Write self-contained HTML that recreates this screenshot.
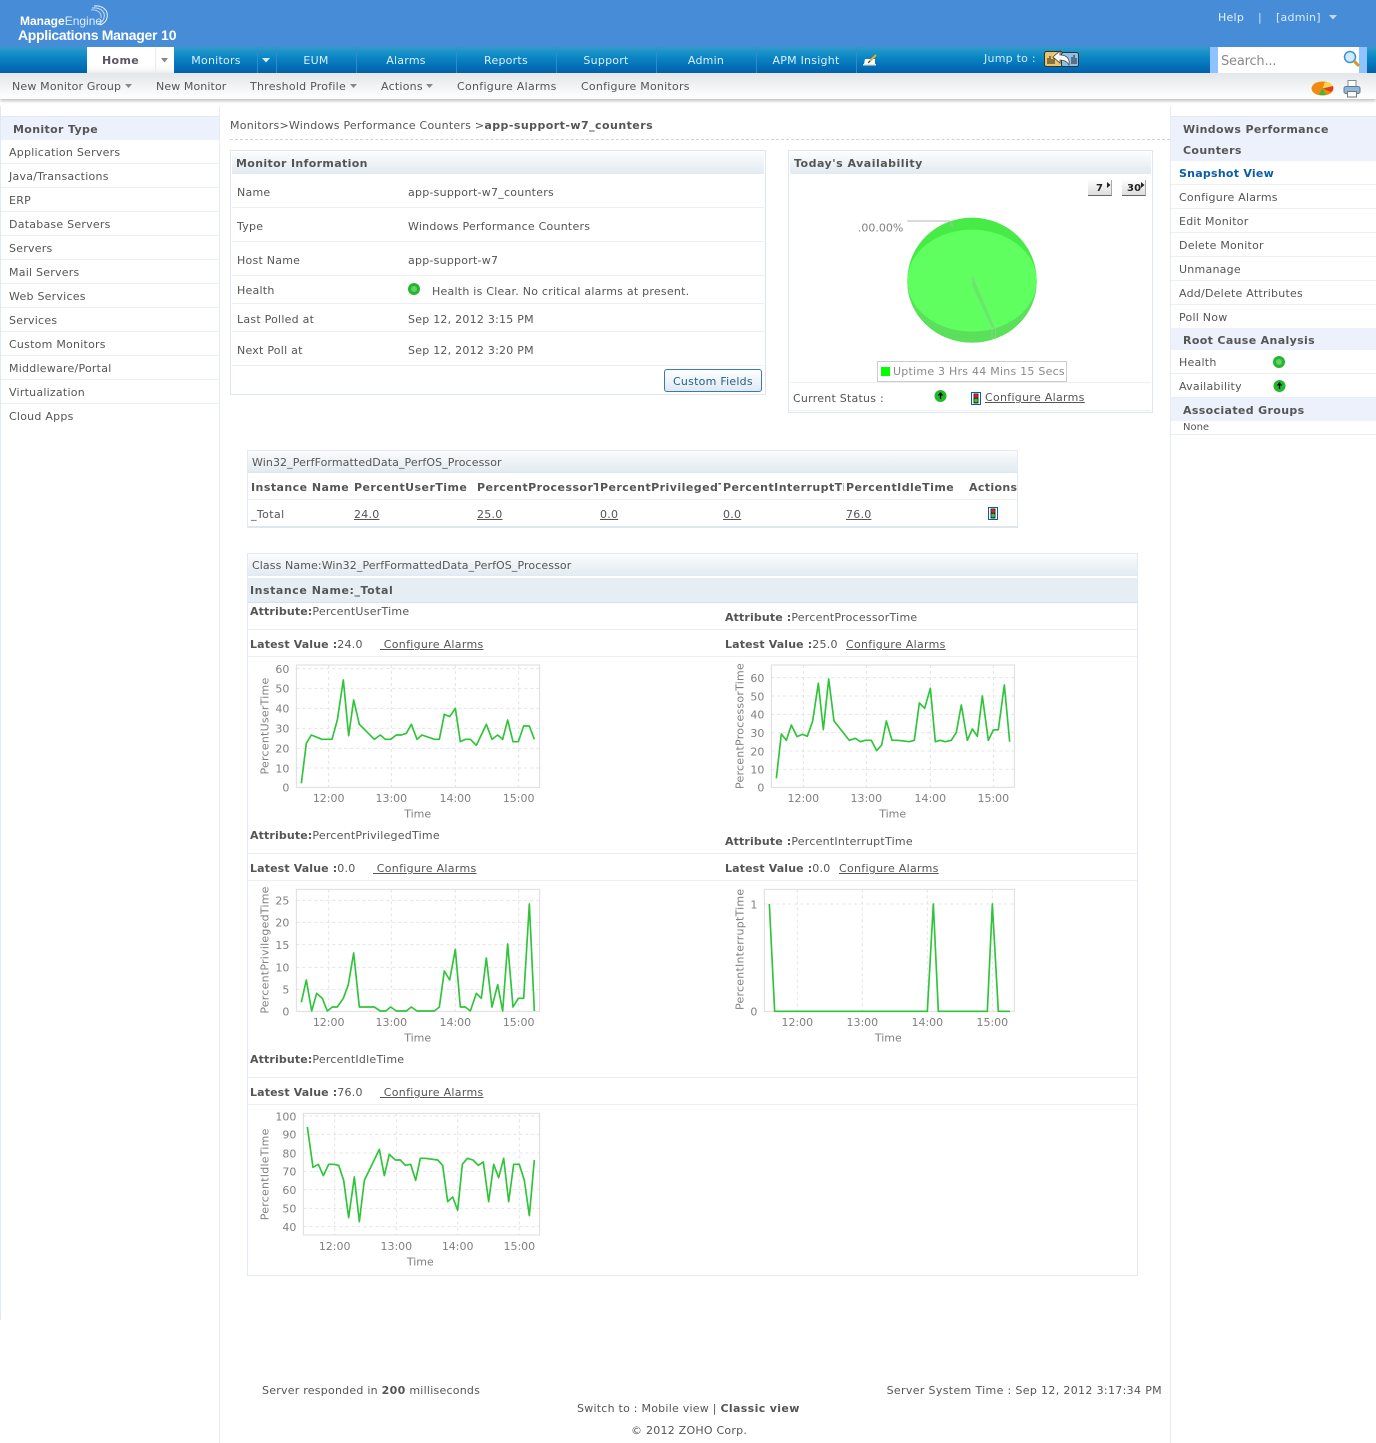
<!DOCTYPE html>
<html><head><meta charset="utf-8"><title>Applications Manager</title>
<style>
html,body{margin:0;padding:0;background:#fff}
body{position:relative;width:1376px;height:1443px;overflow:hidden;font:11px/14px "DejaVu Sans","Liberation Sans",sans-serif;color:#555}
.t{position:absolute;white-space:nowrap;line-height:14px;margin-top:1px;letter-spacing:.24px}
.b{font-weight:bold;letter-spacing:.35px}
.a{font-weight:bold;letter-spacing:.13px}
.r{position:absolute}
.u{text-decoration:underline}
.nav{color:#dcefff;transform:translateX(-50%)}
.hl{position:absolute;height:1px;background:#ebf0f6}
.grad{position:absolute;background:linear-gradient(#fbfcfd,#e2eaf1)}
.band{position:absolute;background:#edf1fb}
.clip{overflow:hidden}
.th{letter-spacing:.45px}
.sm{font-size:11px;letter-spacing:.1px}
svg{position:absolute;overflow:visible}
svg text{font-family:"DejaVu Sans","Liberation Sans",sans-serif;font-size:33px;fill:#808080;letter-spacing:0}
svg text[transform]{letter-spacing:.7px}
.g{stroke:#e4e4e4;stroke-width:3;stroke-dasharray:9 9;fill:none}
.box{fill:none;stroke:#ddd;stroke-width:3}
.l{fill:none;stroke:#2fc43a;stroke-width:5;stroke-linejoin:round}
</style></head><body>

<!-- top header -->
<div class="r" style="left:0;top:0;width:1376px;height:47px;background:#478cd7"></div>
<div class="t" style="left:20px;top:13px;color:#fff;font:bold 12px/14px 'Liberation Sans',sans-serif;letter-spacing:0">Manage<span style="font-weight:normal;color:#dfeeff">Engine</span></div>
<div class="t" style="left:18px;top:27px;color:#fff;font:bold 14px/15px 'Liberation Sans',sans-serif;letter-spacing:-.32px">Applications Manager</div>
<div class="t" style="left:161px;top:27px;color:#fff;font:bold 14px/15px 'Liberation Sans',sans-serif;letter-spacing:0">10</div>
<svg style="left:84px;top:4px" width="28" height="24" viewBox="0 0 28 24"><path d="M10 2C18 1 25 6 23 14C22 18 19 20 16 21" fill="none" stroke="#eaf3ff" stroke-width="1"/><path d="M8 4C15 3 22 7 20 14C19 17 17 19 14 20" fill="none" stroke="#cfe2fa" stroke-width="1"/><path d="M7 6C13 5 18 9 17 14" fill="none" stroke="#b8d4f5" stroke-width="1"/></svg>
<div class="t" style="left:1218px;top:10px;color:#e8f3ff">Help</div>
<div class="t" style="left:1258px;top:10px;color:#cfe3fb">|</div>
<div class="t" style="left:1276px;top:10px;color:#dcebff">[admin]</div>
<svg style="left:1329px;top:15px" width="8" height="5"><path d="M0 0H8L4 4.500Z" fill="#c3daf5"/></svg>

<!-- nav -->
<div class="r" style="left:0;top:47px;width:1376px;height:26px;background:linear-gradient(#2e9ccb,#0a86c4 40%,#0060ad)"></div>
<div class="r" style="left:87px;top:47px;width:87px;height:26px;background:linear-gradient(#fff,#fff 70%,#eef1f3)"></div>
<div class="r" style="left:155px;top:47px;width:1px;height:26px;background:#e8ebed"></div>
<div class="t b" style="left:102px;top:53px;color:#5a5560">Home</div>
<svg style="left:161px;top:58px" width="8" height="5"><path d="M0 0H7L3.500 4.500Z" fill="#888"/></svg>
<svg style="left:262px;top:58px" width="8" height="5"><path d="M0 0H8L4 4.500Z" fill="#d6ecfb"/></svg>
<div class="r" style="left:257px;top:47px;width:1px;height:26px;background:#2e8dcb"></div>
<div class="r" style="left:276px;top:47px;width:1px;height:26px;background:#2e8dcb"></div>
<div class="r" style="left:356px;top:47px;width:1px;height:26px;background:#2e8dcb"></div>
<div class="r" style="left:456px;top:47px;width:1px;height:26px;background:#2e8dcb"></div>
<div class="r" style="left:556px;top:47px;width:1px;height:26px;background:#2e8dcb"></div>
<div class="r" style="left:656px;top:47px;width:1px;height:26px;background:#2e8dcb"></div>
<div class="r" style="left:756px;top:47px;width:1px;height:26px;background:#2e8dcb"></div>
<div class="r" style="left:856px;top:47px;width:1px;height:26px;background:#2e8dcb"></div>
<div class="t nav" style="left:216px;top:53px">Monitors</div>
<div class="t nav" style="left:316px;top:53px">EUM</div>
<div class="t nav" style="left:406px;top:53px">Alarms</div>
<div class="t nav" style="left:506px;top:53px">Reports</div>
<div class="t nav" style="left:606px;top:53px">Support</div>
<div class="t nav" style="left:706px;top:53px">Admin</div>
<div class="t nav" style="left:806px;top:53px">APM Insight</div>
<svg style="left:862px;top:54px" width="16" height="12" viewBox="0 0 16 12"><path d="M3 5H13V10H2Z" fill="#fff"/><path d="M1 10H14V11.500H1Z" fill="#e4e4e4"/><path d="M7 8L14 1" stroke="#e6b030" stroke-width="2"/><path d="M6 9L8 7" stroke="#333" stroke-width="1"/></svg>
<div class="t" style="left:984px;top:51px;color:#d4ecff">Jump to :</div>
<svg style="left:1044px;top:50px" width="36" height="19" viewBox="0 0 36 19"><rect x=".5" y="1.500" width="18" height="15" rx="2" fill="#e8c46a" stroke="#333"/><rect x="17.500" y="2.500" width="17" height="14" rx="2" fill="#8fc0ea" stroke="#333"/><path d="M4 14V8M6 14V6M8 14V9M10 14V7M28 14V7M30 14V5M32 14V8" stroke="#222" stroke-width="1"/><path d="M9 7L16 1V5C23 5 26 9 25 15C23 11 20 10 16 10V13Z" fill="#fff" stroke="#444" stroke-width=".8"/></svg>
<div class="r" style="left:1210px;top:47px;width:157px;height:26px;background:#8fc3ff"></div>
<div class="r" style="left:1218px;top:47px;width:141px;height:26px;background:#fff"></div>
<div class="t" style="left:1221px;top:54px;font-size:13px;color:#8a8a8a;letter-spacing:-.2px">Search...</div>
<svg style="left:1343px;top:50px" width="18" height="19" viewBox="0 0 18 19"><circle cx="7" cy="7" r="5.500" fill="#cfeaff" stroke="#3b8fd0" stroke-width="1.500"/><path d="M11 11L16 16" stroke="#d09a20" stroke-width="3"/></svg>

<!-- sub menu -->
<div class="r" style="left:0;top:73px;width:1376px;height:26px;background:linear-gradient(#e3e7e9,#fff);box-shadow:0 2px 3px rgba(120,120,120,.45)"></div>
<div class="t" style="left:12px;top:79px;letter-spacing:.17px">New Monitor Group</div>
<svg style="left:125px;top:84px" width="7" height="4"><path d="M0 0H7L3.500 4Z" fill="#888"/></svg>
<div class="t" style="left:156px;top:79px;letter-spacing:.1px">New Monitor</div>
<div class="t" style="left:250px;top:79px">Threshold Profile</div>
<svg style="left:350px;top:84px" width="7" height="4"><path d="M0 0H7L3.500 4Z" fill="#888"/></svg>
<div class="t" style="left:381px;top:79px">Actions</div>
<svg style="left:426px;top:84px" width="7" height="4"><path d="M0 0H7L3.500 4Z" fill="#888"/></svg>
<div class="t" style="left:457px;top:79px;letter-spacing:.3px">Configure Alarms</div>
<div class="t" style="left:581px;top:79px">Configure Monitors</div>
<svg style="left:1311px;top:81px" width="23" height="15" viewBox="0 0 23 15"><ellipse cx="11.500" cy="7.500" rx="11" ry="7" fill="#f08a10"/><path d="M11.500 7.500L22 5A11 7 0 0 1 20 11Z" fill="#e83a20"/><path d="M11.500 7.500L22 5A11 7 0 0 0 14 1Z" fill="#f7d94a"/><path d="M11.500 7.500L15 14H8Z" fill="#2fbf3a"/></svg>
<svg style="left:1343px;top:80px" width="18" height="18" viewBox="0 0 18 18"><rect x="5" y=".5" width="8" height="7" fill="#fff" stroke="#888"/><rect x="1" y="6.500" width="16" height="7" rx="2" fill="#8fb8dc" stroke="#5a7a96"/><rect x="4.500" y="11.500" width="9" height="5.500" fill="#fff" stroke="#777"/></svg>

<!-- sidebars -->
<div class="r" style="left:0;top:106px;width:1px;height:1214px;background:#dfe8f3"></div>
<div class="r" style="left:219px;top:106px;width:1px;height:1337px;background:#e4ebf3"></div>
<div class="r" style="left:1170px;top:106px;width:1px;height:1337px;background:#e4ebf3"></div>
<div class="band" style="left:1px;top:116px;width:218px;height:24px;border-top:1px solid #e2e9f3;box-sizing:border-box"></div>
<div class="t b" style="left:13px;top:122px">Monitor Type</div>
<div class="t" style="left:9px;top:145px">Application Servers</div><div class="hl" style="left:1px;top:163px;width:218px"></div>
<div class="t" style="left:9px;top:169px">Java/Transactions</div><div class="hl" style="left:1px;top:187px;width:218px"></div>
<div class="t" style="left:9px;top:193px">ERP</div><div class="hl" style="left:1px;top:211px;width:218px"></div>
<div class="t" style="left:9px;top:217px">Database Servers</div><div class="hl" style="left:1px;top:235px;width:218px"></div>
<div class="t" style="left:9px;top:241px">Servers</div><div class="hl" style="left:1px;top:259px;width:218px"></div>
<div class="t" style="left:9px;top:265px">Mail Servers</div><div class="hl" style="left:1px;top:283px;width:218px"></div>
<div class="t" style="left:9px;top:289px">Web Services</div><div class="hl" style="left:1px;top:307px;width:218px"></div>
<div class="t" style="left:9px;top:313px">Services</div><div class="hl" style="left:1px;top:331px;width:218px"></div>
<div class="t" style="left:9px;top:337px">Custom Monitors</div><div class="hl" style="left:1px;top:355px;width:218px"></div>
<div class="t" style="left:9px;top:361px">Middleware/Portal</div><div class="hl" style="left:1px;top:379px;width:218px"></div>
<div class="t" style="left:9px;top:385px">Virtualization</div><div class="hl" style="left:1px;top:403px;width:218px"></div>
<div class="t" style="left:9px;top:409px">Cloud Apps</div>

<div class="band" style="left:1171px;top:116px;width:205px;height:45px;border-top:1px solid #e2e9f3;box-sizing:border-box"></div>
<div class="t b" style="left:1183px;top:122px">Windows Performance</div>
<div class="t b" style="left:1183px;top:143px">Counters</div>
<div class="t b" style="left:1179px;top:166px;color:#0a5cab;letter-spacing:.25px">Snapshot View</div><div class="hl" style="left:1171px;top:184px;width:205px"></div>
<div class="t" style="left:1179px;top:190px">Configure Alarms</div><div class="hl" style="left:1171px;top:208px;width:205px"></div>
<div class="t" style="left:1179px;top:214px">Edit Monitor</div><div class="hl" style="left:1171px;top:232px;width:205px"></div>
<div class="t" style="left:1179px;top:238px">Delete Monitor</div><div class="hl" style="left:1171px;top:256px;width:205px"></div>
<div class="t" style="left:1179px;top:262px">Unmanage</div><div class="hl" style="left:1171px;top:280px;width:205px"></div>
<div class="t" style="left:1179px;top:286px">Add/Delete Attributes</div><div class="hl" style="left:1171px;top:304px;width:205px"></div>
<div class="t" style="left:1179px;top:310px">Poll Now</div>
<div class="band" style="left:1171px;top:328px;width:205px;height:22px"></div>
<div class="t b" style="left:1183px;top:333px">Root Cause Analysis</div>
<div class="t" style="left:1179px;top:355px">Health</div><div class="hl" style="left:1171px;top:373px;width:205px"></div>
<svg style="left:1273px;top:356px" width="12" height="12"><circle cx="6" cy="6" r="6" fill="#25b530"/><circle cx="6" cy="6" r="3" fill="#62cf68"/></svg>
<div class="t" style="left:1179px;top:379px">Availability</div><div class="hl" style="left:1171px;top:397px;width:205px"></div>
<svg style="left:1273px;top:380px" width="13" height="12" viewBox="0 0 13 12"><circle cx="6.500" cy="6" r="6" fill="#22b82e"/><path d="M6.500 9V4M4.500 5.500L6.500 3L8.500 5.500" stroke="#000" stroke-width="1.300" fill="none"/></svg>
<div class="band" style="left:1171px;top:398px;width:205px;height:23px"></div>
<div class="t b" style="left:1183px;top:403px">Associated Groups</div>
<div class="t" style="left:1183px;top:420px;font-size:10px;letter-spacing:0">None</div><div class="hl" style="left:1171px;top:434px;width:205px"></div>

<!-- breadcrumb -->
<div class="t" style="left:230px;top:118px">Monitors&gt;Windows Performance Counters &gt;<span class="b" style="letter-spacing:.45px">app-support-w7_counters</span></div>
<div class="r" style="left:230px;top:139px;width:940px;border-top:1px dashed #ccd3d9"></div>

<!-- Monitor info -->
<div class="r" style="left:230px;top:150px;width:534px;height:243px;border:1px solid #dde6ee"></div>
<div class="grad" style="left:232px;top:152px;width:532px;height:22px"></div>
<div class="t b" style="left:236px;top:156px">Monitor Information</div>
<div class="t" style="left:237px;top:185px">Name</div><div class="t" style="left:408px;top:185px">app-support-w7_counters</div>
<div class="hl" style="left:232px;top:207px;width:532px"></div>
<div class="t" style="left:237px;top:219px">Type</div><div class="t" style="left:408px;top:219px">Windows Performance Counters</div>
<div class="hl" style="left:232px;top:241px;width:532px"></div>
<div class="t" style="left:237px;top:253px">Host Name</div><div class="t" style="left:408px;top:253px">app-support-w7</div>
<div class="hl" style="left:232px;top:275px;width:532px"></div>
<div class="t" style="left:237px;top:283px">Health</div>
<svg style="left:408px;top:283px" width="12" height="12"><circle cx="6" cy="6" r="6" fill="#25b530"/><circle cx="6" cy="6" r="3" fill="#62cf68"/></svg>
<div class="t" style="left:432px;top:284px">Health is Clear. No critical alarms at present.</div>
<div class="hl" style="left:232px;top:303px;width:532px"></div>
<div class="t" style="left:237px;top:312px">Last Polled at</div><div class="t" style="left:408px;top:312px">Sep 12, 2012 3:15 PM</div>
<div class="hl" style="left:232px;top:331px;width:532px"></div>
<div class="t" style="left:237px;top:343px">Next Poll at</div><div class="t" style="left:408px;top:343px">Sep 12, 2012 3:20 PM</div>
<div class="hl" style="left:232px;top:365px;width:532px"></div>
<div class="r" style="left:664px;top:369px;width:96px;height:21px;border:1px solid #3a7ca8;border-radius:3px;background:linear-gradient(#fff,#dfe9f2)"></div>
<div class="t" style="left:673px;top:374px;color:#245f8c">Custom Fields</div>

<!-- Availability -->
<div class="r" style="left:788px;top:150px;width:363px;height:261px;border:1px solid #dde6ee"></div>
<div class="grad" style="left:790px;top:152px;width:361px;height:22px"></div>
<div class="t b" style="left:794px;top:156px;letter-spacing:.5px">Today's Availability</div>
<div class="r" style="left:1088px;top:180px;width:23px;height:15px;background:linear-gradient(#fdfdfd,#ddd);border-bottom:1px solid #666;border-right:1px solid #aaa"></div>
<div class="t b" style="left:1096px;top:181px;color:#222;font-size:10px;letter-spacing:0">7</div>
<svg style="left:1107px;top:182px" width="4" height="6"><path d="M0 0L3.500 3L0 6Z" fill="#222"/></svg>
<div class="r" style="left:1122px;top:180px;width:23px;height:15px;background:linear-gradient(#fdfdfd,#ddd);border-bottom:1px solid #666;border-right:1px solid #aaa"></div>
<div class="t b" style="left:1127px;top:181px;color:#222;font-size:10px;letter-spacing:.2px">30</div>
<svg style="left:1141px;top:182px" width="4" height="6"><path d="M0 0L3.500 3L0 6Z" fill="#222"/></svg>
<svg style="left:788px;top:150px" width="370" height="270" viewBox="0 0 1110 810">
<path d="M358 390A194 187 0 0 1 746 390V396A194 182 0 0 1 358 396Z" fill="#47ea47"/>
<path d="M358 390A194 153 0 0 0 746 390V396A194 182 0 0 1 358 396Z" fill="#5ae05a"/>
<ellipse cx="552" cy="392" rx="194" ry="153" fill="#5fff5f"/>
<path d="M552 372L552 408L612 535L622 535Z" fill="#5cf05c" stroke="#a5d0a5" stroke-width="1.500"/>
<path d="M622 535V570M612 535V566" stroke="#a5d0a5" stroke-width="1.500" fill="none"/>
<path d="M358 213H485L495 230" stroke="#b5b5b5" stroke-width="3" fill="none"/>
<text x="346" y="245" text-anchor="end">.00.00%</text>
</svg>
<div class="r" style="left:877px;top:361px;width:188px;height:19px;border:1px solid #ccc"></div>
<div class="r" style="left:881px;top:367px;width:9px;height:9px;background:#0f0"></div>
<div class="t" style="left:893px;top:364px;color:#8a8a8a">Uptime 3 Hrs 44 Mins 15 Secs</div>
<div class="hl" style="left:790px;top:382px;width:361px"></div>
<div class="hl" style="left:790px;top:410px;width:361px"></div>
<div class="t" style="left:793px;top:391px">Current Status :</div>
<svg style="left:934px;top:390px" width="13" height="12" viewBox="0 0 13 12"><circle cx="6.500" cy="6" r="6" fill="#22b82e"/><path d="M6.500 9V4M4.500 5.500L6.500 3L8.500 5.500" stroke="#000" stroke-width="1.300" fill="none"/></svg>
<svg style="left:971px;top:392px" width="10" height="13" viewBox="0 0 10 13"><rect x=".5" y=".5" width="9" height="12" fill="#fff" stroke="#0a5cab"/><rect x="2.500" y="1.500" width="5" height="10" fill="#333"/><circle cx="5" cy="4" r="1.800" fill="#e02020"/><circle cx="5" cy="8.500" r="1.800" fill="#3c3"/></svg>
<div class="t u" style="left:985px;top:390px;letter-spacing:.3px">Configure Alarms</div>

<!-- instance table -->
<div class="r" style="left:247px;top:450px;width:769px;height:75px;border:1px solid #e2e9f0;border-bottom:2px solid #dfe6ec"></div>
<div class="grad" style="left:248px;top:451px;width:769px;height:21px"></div>
<div class="t sm" style="left:252px;top:455px">Win32_PerfFormattedData_PerfOS_Processor</div>
<div class="hl" style="left:248px;top:472px;width:769px;background:#dfe7ee"></div>
<div class="hl" style="left:248px;top:499px;width:769px"></div>
<div class="t b th" style="left:251px;top:480px">Instance Name</div>
<div class="t b th clip" style="left:354px;top:480px;width:122px">PercentUserTime</div>
<div class="t b th clip" style="left:477px;top:480px;width:121px">PercentProcessorTime</div>
<div class="t b th clip" style="left:600px;top:480px;width:121px">PercentPrivilegedTime</div>
<div class="t b th clip" style="left:723px;top:480px;width:121px">PercentInterruptTime</div>
<div class="t b th clip" style="left:846px;top:480px;width:121px">PercentIdleTime</div>
<div class="t b" style="left:969px;top:480px">Actions</div>
<div class="t" style="left:251px;top:507px;letter-spacing:.4px">_Total</div>
<div class="t u" style="left:354px;top:507px">24.0</div>
<div class="t u" style="left:477px;top:507px">25.0</div>
<div class="t u" style="left:600px;top:507px">0.0</div>
<div class="t u" style="left:723px;top:507px">0.0</div>
<div class="t u" style="left:846px;top:507px">76.0</div>
<svg style="left:988px;top:507px" width="10" height="13" viewBox="0 0 10 13"><rect x=".5" y=".5" width="9" height="12" fill="#fff" stroke="#0a5cab"/><rect x="2.500" y="1.500" width="5" height="10" fill="#333"/><circle cx="5" cy="4" r="1.800" fill="#e02020"/><circle cx="5" cy="8.500" r="1.800" fill="#3c3"/></svg>

<!-- class box -->
<div class="r" style="left:247px;top:553px;width:889px;height:721px;border:1px solid #e2e9f0"></div>
<div class="grad" style="left:248px;top:554px;width:889px;height:22px"></div>
<div class="t sm" style="left:252px;top:558px">Class Name:Win32_PerfFormattedData_PerfOS_Processor</div>
<div class="r" style="left:248px;top:578px;width:889px;height:24px;background:#e6edf3;border-bottom:1px solid #d8e1e9"></div>
<div class="t b" style="left:250px;top:583px;letter-spacing:.55px">Instance Name:_Total</div>

<div class="t" style="left:250px;top:604px"><span class="a">Attribute:</span>PercentUserTime</div>
<div class="t" style="left:725px;top:610px"><span class="a">Attribute :</span>PercentProcessorTime</div>
<div class="hl" style="left:248px;top:629px;width:889px"></div>
<div class="t" style="left:250px;top:637px"><span class="a">Latest Value :</span>24.0</div>
<div class="t u" style="left:380px;top:637px;letter-spacing:.3px">&nbsp;Configure Alarms</div>
<div class="t" style="left:725px;top:637px"><span class="a">Latest Value :</span>25.0</div>
<div class="t u" style="left:846px;top:637px;letter-spacing:.3px">Configure Alarms</div>
<div class="hl" style="left:248px;top:656px;width:889px"></div>

<svg style="left:247px;top:655px" width="300" height="170" viewBox="0 0 900 510">
<path class="g" d="M148 41H878M148 100H878M148 160H878M148 220H878M148 280H878M148 339H878M245 30V397M433 30V397M625 30V397M815 30V397"/>
<rect class="box" x="148" y="30" width="730" height="367"/>
<g text-anchor="end"><text x="127" y="54">60</text><text x="127" y="113">50</text><text x="127" y="173">40</text><text x="127" y="233">30</text><text x="127" y="293">20</text><text x="127" y="352">10</text><text x="127" y="410">0</text></g>
<g text-anchor="middle"><text x="245" y="441">12:00</text><text x="433" y="441">13:00</text><text x="625" y="441">14:00</text><text x="815" y="441">15:00</text><text x="512" y="488">Time</text>
<text transform="translate(65 213) rotate(-90)">PercentUserTime</text></g>
<polyline class="l" points="163,385 178,265 193,240 225,253 255,253 271,195 289,75 305,242 320,135 337,208 382,253 400,240 415,253 431,253 448,240 463,240 478,235 493,208 510,253 525,240 562,253 577,253 592,178 608,185 625,160 640,260 655,253 670,253 688,271 718,208 735,253 752,240 767,253 782,195 798,260 814,260 830,213 847,213 862,253"/>
</svg>

<svg style="left:725px;top:655px" width="300" height="170" viewBox="0 0 900 510">
<path class="g" d="M139 68H868M139 123H868M139 178H868M139 233H868M139 288H868M139 343H868M235 30V397M424 30V397M616 30V397M805 30V397"/>
<rect class="box" x="139" y="30" width="729" height="367"/>
<g text-anchor="end"><text x="118" y="81">60</text><text x="118" y="136">50</text><text x="118" y="191">40</text><text x="118" y="246">30</text><text x="118" y="301">20</text><text x="118" y="356">10</text><text x="118" y="410">0</text></g>
<g text-anchor="middle"><text x="235" y="441">12:00</text><text x="424" y="441">13:00</text><text x="616" y="441">14:00</text><text x="805" y="441">15:00</text><text x="503" y="488">Time</text>
<text transform="translate(56 213) rotate(-90)">PercentProcessorTime</text></g>
<polyline class="l" points="154,370 169,237 184,256 199,210 216,245 232,238 247,244 263,198 280,85 295,224 311,72 327,198 373,256 391,250 406,260 421,256 439,256 455,287 470,270 484,198 501,256 518,256 553,260 568,256 583,144 599,160 616,100 631,260 646,256 661,260 679,256 694,232 709,150 727,256 742,222 757,244 772,123 790,256 805,225 820,224 838,90 854,260"/>
</svg>

<div class="t" style="left:250px;top:828px"><span class="a">Attribute:</span>PercentPrivilegedTime</div>
<div class="t" style="left:725px;top:834px"><span class="a">Attribute :</span>PercentInterruptTime</div>
<div class="hl" style="left:248px;top:853px;width:889px"></div>
<div class="t" style="left:250px;top:861px"><span class="a">Latest Value :</span>0.0</div>
<div class="t u" style="left:373px;top:861px;letter-spacing:.3px">&nbsp;Configure Alarms</div>
<div class="t" style="left:725px;top:861px"><span class="a">Latest Value :</span>0.0</div>
<div class="t u" style="left:839px;top:861px;letter-spacing:.3px">Configure Alarms</div>
<div class="hl" style="left:248px;top:880px;width:889px"></div>

<svg style="left:247px;top:880px" width="300" height="170" viewBox="0 0 900 510">
<path class="g" d="M148 61H878M148 127H878M148 194H878M148 262H878M148 328H878M245 28V394M433 28V394M625 28V394M815 28V394"/>
<rect class="box" x="148" y="28" width="730" height="366"/>
<g text-anchor="end"><text x="127" y="74">25</text><text x="127" y="140">20</text><text x="127" y="207">15</text><text x="127" y="275">10</text><text x="127" y="341">5</text><text x="127" y="407">0</text></g>
<g text-anchor="middle"><text x="245" y="438">12:00</text><text x="433" y="438">13:00</text><text x="625" y="438">14:00</text><text x="815" y="438">15:00</text><text x="512" y="484">Time</text>
<text transform="translate(65 210) rotate(-90)">PercentPrivilegedTime</text></g>
<polyline class="l" points="163,367 178,300 194,393 209,340 226,355 241,393 256,381 271,381 289,355 304,314 320,219 337,381 382,381 400,393 416,393 431,381 448,393 478,393 493,381 510,393 562,393 577,381 592,273 608,300 625,208 640,381 655,381 670,393 688,340 703,355 718,234 735,381 752,314 767,393 782,192 798,381 814,355 830,355 847,72 862,393"/>
</svg>

<svg style="left:725px;top:880px" width="300" height="170" viewBox="0 0 900 510">
<path class="g" d="M118 72H868M217 28V394M412 28V394M607 28V394M802 28V394"/>
<rect class="box" x="118" y="28" width="750" height="366"/>
<g text-anchor="end"><text x="97" y="85">1</text><text x="97" y="407">0</text></g>
<g text-anchor="middle"><text x="217" y="438">12:00</text><text x="412" y="438">13:00</text><text x="607" y="438">14:00</text><text x="802" y="438">15:00</text><text x="490" y="484">Time</text>
<text transform="translate(56 208) rotate(-90)">PercentInterruptTime</text></g>
<polyline class="l" points="133,72 149,394 607,394 625,72 640,394 787,394 802,72 820,394 855,394"/>
</svg>

<div class="t" style="left:250px;top:1052px"><span class="a">Attribute:</span>PercentIdleTime</div>
<div class="hl" style="left:248px;top:1077px;width:889px"></div>
<div class="t" style="left:250px;top:1085px"><span class="a">Latest Value :</span>76.0</div>
<div class="t u" style="left:380px;top:1085px;letter-spacing:.3px">&nbsp;Configure Alarms</div>
<div class="hl" style="left:248px;top:1104px;width:889px"></div>

<svg style="left:247px;top:1105px" width="300" height="170" viewBox="0 0 900 510">
<path class="g" d="M169 33H878M169 88H878M169 144H878M169 199H878M169 254H878M169 310H878M169 365H878M263 25V390M448 25V390M632 25V390M817 25V390"/>
<rect class="box" x="169" y="25" width="709" height="365"/>
<g text-anchor="end"><text x="148" y="46">100</text><text x="148" y="101">90</text><text x="148" y="157">80</text><text x="148" y="212">70</text><text x="148" y="267">60</text><text x="148" y="323">50</text><text x="148" y="378">40</text></g>
<g text-anchor="middle"><text x="263" y="435">12:00</text><text x="448" y="435">13:00</text><text x="632" y="435">14:00</text><text x="817" y="435">15:00</text><text x="520" y="481">Time</text>
<text transform="translate(65 208) rotate(-90)">PercentIdleTime</text></g>
<polyline class="l" points="181,66 198,187 214,178 229,212 245,178 260,178 275,181 290,226 305,338 322,216 337,350 352,226 397,133 412,212 427,148 445,165 460,165 475,181 491,178 506,226 520,160 535,160 572,165 587,181 602,290 617,276 632,316 646,178 661,160 678,165 694,181 709,171 725,290 740,178 755,218 770,160 785,290 800,178 817,178 832,226 847,332 862,165"/>
</svg>

<!-- footer -->
<div class="t" style="left:262px;top:1383px">Server responded in <span class="b">200</span> milliseconds</div>
<div class="t" style="right:214px;top:1383px;letter-spacing:.34px">Server System Time : Sep 12, 2012 3:17:34 PM</div>
<div class="t" style="left:577px;top:1401px">Switch to : Mobile view | <span class="b">Classic view</span></div>
<div class="t" style="left:631px;top:1423px">© 2012 ZOHO Corp.</div>
</body></html>
